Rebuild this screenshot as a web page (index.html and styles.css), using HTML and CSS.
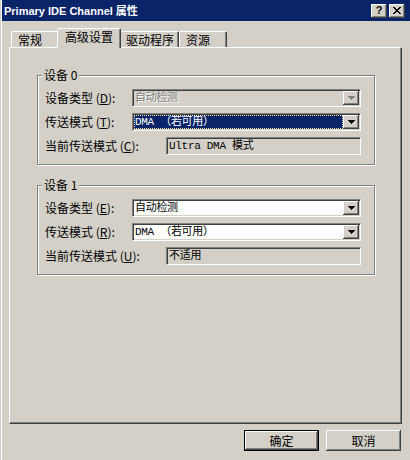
FILE: index.html
```html
<!DOCTYPE html>
<html lang="zh-CN">
<head>
    <meta charset="UTF-8">
    <title>Primary IDE Channel 属性</title>
    <link rel="stylesheet" href="styles.css">
</head>
<body>
    <div class="window">
        <div class="titlebar">
            <span class="title">Primary IDE Channel 属性</span>
            <div class="caption-buttons">
                <span class="cap-btn help">?</span>
                <span class="cap-btn close">
                    <svg width="8" height="7" viewBox="0 0 8 7" shape-rendering="crispEdges">
                        <path d="M0 0h2v1H0z M6 0h2v1H6z M1 1h2v1H1z M5 1h2v1H5z M2 2h4v1H2z M3 3h2v1H3z M2 4h4v1H2z M1 5h2v1H1z M5 5h2v1H5z M0 6h2v1H0z M6 6h2v1H6z" fill="#000"/>
                    </svg>
                </span>
            </div>
        </div>

        <div class="content">
            <div class="tabs">
                <div class="tab">常规</div>
                <div class="tab active">高级设置</div>
                <div class="tab">驱动程序</div>
                <div class="tab">资源</div>
            </div>

            <div class="panel">
                <fieldset class="group">
                    <legend>设备 0</legend>
                    <div class="row">
                        <span class="label">设备类型 (<u>D</u>):</span>
                        <div class="combo disabled">
                            <span class="combo-text">自动检测</span>
                            <span class="combo-btn">
                                <svg width="7" height="4" viewBox="0 0 7 4" shape-rendering="crispEdges"><path d="M0 0h7v1H0z M1 1h5v1H1z M2 2h3v1H2z M3 3h1v1H3z"/></svg>
                            </span>
                        </div>
                    </div>
                    <div class="row">
                        <span class="label">传送模式 (<u>T</u>):</span>
                        <div class="combo">
                            <span class="combo-text selected">DMA （若可用）</span>
                            <span class="combo-btn">
                                <svg width="7" height="4" viewBox="0 0 7 4" shape-rendering="crispEdges"><path d="M0 0h7v1H0z M1 1h5v1H1z M2 2h3v1H2z M3 3h1v1H3z"/></svg>
                            </span>
                        </div>
                    </div>
                    <div class="row wide">
                        <span class="label">当前传送模式 (<u>C</u>):</span>
                        <div class="field">Ultra DMA 模式</div>
                    </div>
                </fieldset>

                <fieldset class="group">
                    <legend>设备 1</legend>
                    <div class="row">
                        <span class="label">设备类型 (<u>E</u>):</span>
                        <div class="combo">
                            <span class="combo-text">自动检测</span>
                            <span class="combo-btn">
                                <svg width="7" height="4" viewBox="0 0 7 4" shape-rendering="crispEdges"><path d="M0 0h7v1H0z M1 1h5v1H1z M2 2h3v1H2z M3 3h1v1H3z"/></svg>
                            </span>
                        </div>
                    </div>
                    <div class="row">
                        <span class="label">传送模式 (<u>R</u>):</span>
                        <div class="combo">
                            <span class="combo-text">DMA （若可用）</span>
                            <span class="combo-btn">
                                <svg width="7" height="4" viewBox="0 0 7 4" shape-rendering="crispEdges"><path d="M0 0h7v1H0z M1 1h5v1H1z M2 2h3v1H2z M3 3h1v1H3z"/></svg>
                            </span>
                        </div>
                    </div>
                    <div class="row wide">
                        <span class="label">当前传送模式 (<u>U</u>):</span>
                        <div class="field">不适用</div>
                    </div>
                </fieldset>
            </div>

            <div class="footer">
                <button class="btn default">确定</button>
                <button class="btn">取消</button>
            </div>
        </div>
    </div>
</body>
</html>
```

FILE: styles.css
```css
* {
    box-sizing: border-box;
}
body {
    margin: 0;
    background: #d4d0c8;
    font-family: "Noto Sans CJK SC", sans-serif;
    font-size: 12px;
    color: #000;
}
.window {
    width: 410px;
    height: 460px;
    background: #d4d0c8;
    border-left: 1px solid #d4d0c8;
    box-shadow: inset 1px 0 #fff;
    overflow: hidden;
}

/* title bar */
.titlebar {
    display: flex;
    align-items: center;
    height: 21px;
    margin-left: 1px;
    padding: 0 5px 0 2px;
    background: #0a246a;
}
.title {
    color: #fff;
    font-family: "Liberation Sans", "Noto Sans CJK SC", sans-serif;
    font-weight: bold;
    font-size: 11px;
    line-height: 14px;
}
.caption-buttons {
    display: flex;
    margin-left: auto;
    gap: 2px;
}
.cap-btn {
    display: flex;
    align-items: center;
    justify-content: center;
    width: 16px;
    height: 14px;
    background: #d4d0c8;
    box-shadow: inset -1px -1px #404040, inset 1px 1px #fff, inset -2px -2px #808080;
}
.help {
    font-family: "Liberation Sans", sans-serif;
    font-weight: bold;
    font-size: 11px;
    line-height: 14px;
    padding-bottom: 1px;
}

.content {
    padding: 0 8px 0 8px;
}

/* tabs */
.tabs {
    display: flex;
    align-items: flex-end;
    height: 19px;
    margin-top: 7px;
    padding-left: 2px;
}
.tab {
    height: 16px;
    padding: 1px 0 0 6px;
    line-height: 14px;
    background: #d4d0c8;
    border-top: 1px solid #fff;
    border-left: 1px solid #fff;
    border-right: 1px solid #404040;
    border-radius: 2px 2px 0 0;
    box-shadow: inset -1px 0 #808080;
}
.tab:nth-child(1) {
    width: 48px;
}
.tab:nth-child(3) {
    width: 60px;
}
.tab:nth-child(4) {
    width: 48px;
}
.tab.active {
    position: relative;
    z-index: 1;
    width: 64px;
    height: 20px;
    margin: 0 -2px -1px -2px;
    padding-left: 7px;
}

/* panel */
.panel {
    height: 377px;
    padding: 20px 26px 0 27px;
    border-top: 1px solid #fff;
    border-left: 1px solid #fff;
    border-right: 1px solid #404040;
    border-bottom: 1px solid #404040;
    box-shadow: inset -1px -1px #808080;
}
.group {
    margin: 0;
    padding: 7px 13px 9px 7px;
    border: 1px solid #808080;
    box-shadow: inset 1px 1px #fff, 1px 1px #fff;
    min-inline-size: 0;
}
.group + .group {
    margin-top: 13px;
}
.group legend {
    padding: 0 2px;
    margin-left: -3px;
    line-height: 14px;
    background: #d4d0c8;
}
.row {
    display: flex;
    align-items: center;
    height: 18px;
}
.row + .row {
    margin-top: 6px;
}
.label {
    width: 87px;
    flex: none;
    line-height: 14px;
    white-space: nowrap;
}
.row.wide .label {
    width: 121px;
}

/* combo boxes and fields */
.combo,
.field {
    flex: 1;
    display: flex;
    height: 18px;
    border-top: 1px solid #808080;
    border-left: 1px solid #808080;
    border-right: 1px solid #fff;
    border-bottom: 1px solid #fff;
    box-shadow: inset 1px 1px #404040, inset -1px -1px #d4d0c8;
    padding: 1px;
    font-family: "Liberation Mono", "Noto Sans CJK SC", monospace;
    font-size: 11px;
    letter-spacing: -0.3px;
    line-height: 14px;
    background: #fff;
}
.combo-text {
    flex: 1;
    padding-left: 1px;
    white-space: nowrap;
}
.combo-text.selected {
    background: #0a246a;
    color: #fff;
    outline: 1px dotted #f0e8a0;
    outline-offset: -1px;
}
.combo-btn {
    display: flex;
    align-items: center;
    justify-content: center;
    width: 16px;
    height: 14px;
    background: #d4d0c8;
    box-shadow: inset -1px -1px #404040, inset 1px 1px #fff, inset -2px -2px #808080;
}
.combo-btn svg {
    fill: #000;
}
.combo.disabled {
    background: #d4d0c8;
    color: #808080;
    text-shadow: 1px 1px #fff;
}
.combo.disabled .combo-btn svg {
    fill: #808080;
}
.field {
    background: #d4d0c8;
    padding-left: 2px;
}

/* dialog buttons */
.footer {
    display: flex;
    justify-content: flex-end;
    gap: 7px;
    margin-top: 6px;
    padding-right: 1px;
}
.btn {
    width: 75px;
    height: 21px;
    padding: 0;
    border: none;
    background: #d4d0c8;
    font-family: "Noto Sans CJK SC", sans-serif;
    font-size: 12px;
    line-height: 14px;
    color: #000;
    box-shadow: inset -1px -1px #404040, inset 1px 1px #fff, inset -2px -2px #808080;
}
.btn.default {
    border: 1px solid #000;
}
```
